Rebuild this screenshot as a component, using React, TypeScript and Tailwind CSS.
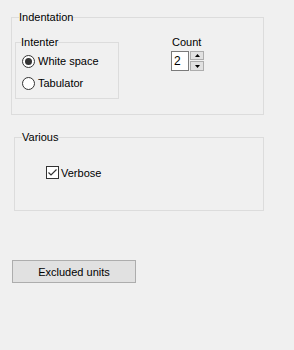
import React, { useState } from 'react';

const font = { fontFamily: '"Liberation Sans", Arial, sans-serif' };

const Radio: React.FC<{ label: string; checked: boolean; onClick: () => void }> = ({ label, checked, onClick }) => (
  <div className="flex items-center h-[22px] cursor-default" onClick={onClick}>
    <span className="w-[13px] h-[13px] rounded-full border border-[#333333] bg-white flex items-center justify-center">
      {checked && <span className="w-[7px] h-[7px] rounded-full bg-[#333333]" />}
    </span>
    <span className="ml-[3px]">{label}</span>
  </div>
);

export default function App() {
  const [mode, setMode] = useState<'space' | 'tab'>('space');
  const [count, setCount] = useState(2);
  const [verbose, setVerbose] = useState(true);

  return (
    <div className="w-[294px] h-[350px] bg-[#f0f0f0] text-[11px] leading-[14px] text-black pt-[10px]" style={font}>
      {/* Indentation */}
      <fieldset className="ml-[11px] w-[253px] border border-[#dcdcdc]">
        <legend className="ml-[7px] px-0 h-[14px]">Indentation</legend>
        <div className="h-[90px] flex">
          <fieldset className="ml-[3px] mt-[11px] w-[104px] border border-[#dcdcdc] self-start">
            <legend className="ml-[5px] h-[14px]">Intenter</legend>
            <div className="h-[49px] pl-[6px] pt-px">
              <Radio label="White space" checked={mode === 'space'} onClick={() => setMode('space')} />
              <Radio label="Tabulator" checked={mode === 'tab'} onClick={() => setMode('tab')} />
            </div>
          </fieldset>

          <div className="ml-[52px] mt-[11px] flex flex-col">
            <span className="h-[14px] pl-px">Count</span>
            <div className="mt-[2px] flex">
              <div className="w-[18px] h-[20px] border border-[#7a7a7a] bg-white pl-[2px] flex items-center text-[12px]">
                {count}
              </div>
              <div className="ml-px flex flex-col w-[14px]">
                <button
                  className="h-[9px] border border-[#adadad] bg-[#e1e1e1] flex items-center justify-center"
                  onClick={() => setCount(c => c + 1)}
                >
                  <svg width="5" height="3" viewBox="0 0 5 3"><path d="M2.5 0L5 3H0z" fill="#000" /></svg>
                </button>
                <button
                  className="mt-px h-[10px] border border-[#adadad] bg-[#e1e1e1] flex items-center justify-center"
                  onClick={() => setCount(c => Math.max(0, c - 1))}
                >
                  <svg width="5" height="3" viewBox="0 0 5 3"><path d="M0 0H5L2.5 3z" fill="#000" /></svg>
                </button>
              </div>
            </div>
          </div>
        </div>
      </fieldset>

      {/* Various */}
      <fieldset className="ml-[14px] mt-[15px] w-[250px] border border-[#dcdcdc]">
        <legend className="ml-[7px] h-[14px]">Various</legend>
        <div className="h-[66px] pl-[31px] pt-[21px]">
          <div className="flex items-center h-[15px] cursor-default" onClick={() => setVerbose(v => !v)}>
            <span className="w-[13px] h-[13px] border border-[#333333] bg-white flex items-center justify-center">
              {verbose && (
                <svg width="11" height="11" viewBox="0 0 11 11">
                  <path d="M1.5 5.5L4 8L9.5 2.5" stroke="#333" strokeWidth="1.2" fill="none" />
                </svg>
              )}
            </span>
            <span className="ml-[2px]">Verbose</span>
          </div>
        </div>
      </fieldset>

      <button className="ml-[12px] mt-[49px] w-[124px] h-[23px] border border-[#adadad] bg-[#e1e1e1] flex items-center justify-center">
        Excluded units
      </button>
    </div>
  );
}
